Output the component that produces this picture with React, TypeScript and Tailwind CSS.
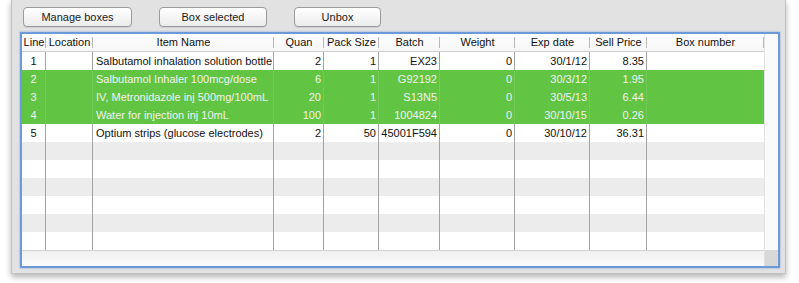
import React from "react";

type Col = { name: string; w: number; align: "left" | "right" | "center" };

const cols: Col[] = [
  { name: "Line", w: 24, align: "center" },
  { name: "Location", w: 47, align: "left" },
  { name: "Item Name", w: 181, align: "left" },
  { name: "Quan", w: 50, align: "right" },
  { name: "Pack Size", w: 55, align: "right" },
  { name: "Batch", w: 61, align: "right" },
  { name: "Weight", w: 75, align: "right" },
  { name: "Exp date", w: 75, align: "right" },
  { name: "Sell Price", w: 57, align: "right" },
  { name: "Box number", w: 117, align: "left" },
];

const rows: string[][] = [
  ["1", "", "Salbutamol inhalation solution bottle", "2", "1", "EX23", "0", "30/1/12", "8.35", ""],
  ["2", "", "Salbutamol Inhaler 100mcg/dose", "6", "1", "G92192", "0", "30/3/12", "1.95", ""],
  ["3", "", "IV, Metronidazole inj 500mg/100mL", "20", "1", "S13N5", "0", "30/5/13", "6.44", ""],
  ["4", "", "Water for injection inj 10mL", "100", "1", "1004824", "0", "30/10/15", "0.26", ""],
  ["5", "", "Optium strips (glucose electrodes)", "2", "50", "45001F594", "0", "30/10/12", "36.31", ""],
  ["", "", "", "", "", "", "", "", "", ""],
  ["", "", "", "", "", "", "", "", "", ""],
  ["", "", "", "", "", "", "", "", "", ""],
  ["", "", "", "", "", "", "", "", "", ""],
  ["", "", "", "", "", "", "", "", "", ""],
  ["", "", "", "", "", "", "", "", "", ""],
];

const selected = new Set([1, 2, 3]);

function Btn({ label, w }: { label: string; w: number }) {
  return (
    <button
      className="h-[20px] rounded-[4px] border border-[#9a9a9a] bg-gradient-to-b from-[#ffffff] to-[#ececec] text-[11px] leading-[18px] text-[#1a1a1a] shadow-[0_1px_0_rgba(0,0,0,0.08)]"
      style={{ width: w }}
    >
      {label}
    </button>
  );
}

export default function App() {
  return (
    <div className="w-[799px] h-[283px] bg-white font-['Liberation_Sans',Arial,sans-serif] overflow-hidden">
      <div className="ml-[11px] w-[775px] h-[274px] bg-[#e2e2e2] border-x border-b border-[#c2c2c2] shadow-[0_3px_6px_rgba(0,0,0,0.3)] flex flex-col">
        <div className="flex gap-[27px] pl-[11px] pt-[7px]">
          <Btn label="Manage boxes" w={109} />
          <Btn label="Box selected" w={108} />
          <Btn label="Unbox" w={87} />
        </div>
        <div className="ml-[8px] mt-[5px] w-[760px] h-[236px] border-2 border-[#6b9ad9] shadow-[0_0_2px_rgba(80,130,210,0.6)] bg-white flex flex-col">
          <div className="flex flex-1">
            <div className="flex flex-col w-[742px]">
              <div className="flex h-[18px] border-b border-[#cfcfcf] bg-gradient-to-b from-white to-[#f6f6f6] text-[11px] leading-[17px] text-[#111]">
                {cols.map((c, i) => (
                  <div key={i} className="relative text-center shrink-0" style={{ width: c.w }}>
                    {c.name}
                    <div className="absolute right-0 top-[3px] h-[11px] w-px bg-[#b8b8b8]" />
                  </div>
                ))}
              </div>
              {rows.map((r, ri) => {
                const sel = selected.has(ri);
                const bg = sel ? "bg-[#61c442]" : ri % 2 === 1 ? "bg-[#ececec]" : "bg-white";
                return (
                  <div key={ri} className={`flex h-[18px] text-[11px] leading-[18px] ${bg} ${sel ? "text-[#f2f2f2]" : "text-[#111]"}`}>
                    {cols.map((c, ci) => (
                      <div
                        key={ci}
                        className={`shrink-0 overflow-hidden whitespace-nowrap ${ci < cols.length - 1 ? (sel ? "border-r border-[#72c95a]" : "border-r border-[#a3a3a3]") : ""} ${
                          c.align === "center" ? "text-center" : c.align === "right" ? "text-right pr-[2px]" : "text-left pl-[3px]"
                        }`}
                        style={{ width: c.w }}
                      >
                        {r[ci]}
                      </div>
                    ))}
                  </div>
                );
              })}
              <div className="h-[16px] border-t border-[#d4d4d4] bg-gradient-to-b from-[#f0f0f0] to-[#fbfbfb]" />
            </div>
            <div className="flex flex-col w-[14px] border-l border-[#e2e2e2] bg-[#fafafa]">
              <div className="flex-1" />
              <div className="h-[16px] bg-[#d8d8d8]" />
            </div>
          </div>
        </div>
      </div>
    </div>
  );
}
